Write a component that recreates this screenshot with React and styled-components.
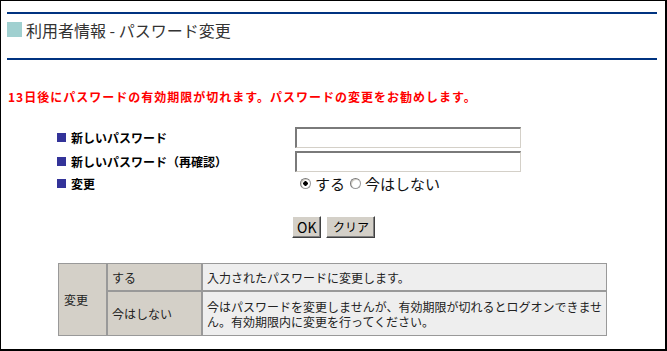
import React from "react";
import styled, { createGlobalStyle } from "styled-components";

const Global = createGlobalStyle`
  html, body { margin: 0; padding: 0; background: #fff; }
  body { font-family: "Noto Sans CJK JP", "Noto Sans", sans-serif; color: #000; }
  * { box-sizing: border-box; }
`;

const Frame = styled.div`
  width: 667px;
  height: 351px;
  border-top: 1px solid #000;
  border-left: 1px solid #000;
  border-right: 2px solid #000;
  border-bottom: 2px solid #000;
  padding: 11px 8px 0 6px;
  overflow: hidden;
`;

const Header = styled.div`
  border-top: 2px solid #003380;
  border-bottom: 2px solid #003380;
  height: 48px;
  padding-top: 8px;
  display: flex;
  align-items: flex-start;
  gap: 4px;
`;

const TitleMark = styled.span`
  width: 15px;
  height: 15px;
  background: #a0d0d0;
  flex: none;
`;

const Title = styled.h1`
  margin: 0;
  font-size: 16px;
  line-height: 16px;
  font-weight: normal;
  color: #333;
`;

const Notice = styled.p`
  margin: 29px 0 0 1px;
  font-size: 12px;
  line-height: 16px;
  font-weight: bold;
  letter-spacing: 1px;
  color: #ff0000;
  white-space: nowrap;
`;

const Form = styled.div`
  margin: 22px 0 0 50px;
  display: grid;
  grid-template-columns: 238px 226px;
  grid-auto-rows: auto;
  row-gap: 3px;
`;

const Label = styled.div`
  display: flex;
  align-items: center;
  gap: 5px;
  font-size: 12px;
  font-weight: bold;
  height: ${(p) => p.$h}px;
  white-space: nowrap;
`;

const LabelMark = styled.span`
  width: 9px;
  height: 9px;
  background: #333399;
  flex: none;
`;

const TextInput = styled.input`
  width: 226px;
  height: 21px;
  margin: 0;
  padding: 1px 3px;
  border-style: solid;
  border-width: 2px 1px 1px 2px;
  border-color: #7a7a7a #d4d0c8 #d4d0c8 #7a7a7a;
  background: #fff;
  font-size: 12px;
  outline: none;
`;

const RadioRow = styled.div`
  display: flex;
  align-items: center;
  height: 17px;
  padding-left: 5px;
  font-size: 15px;
  color: #111;
`;

const RadioLabel = styled.label`
  display: flex;
  align-items: center;
  gap: 4px;
  margin-right: 5px;
  line-height: 17px;
`;

const Radio = styled.input`
  appearance: none;
  -webkit-appearance: none;
  margin: 0;
  width: 11px;
  height: 11px;
  border-radius: 50%;
  border: 1px solid #9a9a9a;
  border-top-color: #7a7a7a;
  border-left-color: #7a7a7a;
  background: #fff;
  box-shadow: inset 1px 1px 0 #d4d0c8;
  &:checked {
    background: radial-gradient(circle, #000 0 2px, #fff 2.5px);
  }
`;

const ButtonRow = styled.div`
  margin: 24px 0 0 285px;
  display: flex;
  gap: 5px;
`;

const Button = styled.button`
  height: 22px;
  min-width: ${(p) => p.$w}px;
  margin: 0;
  padding: 0 4px;
  background: #d4d0c8;
  border-style: solid;
  border-width: 1px;
  border-color: #ffffff #404040 #404040 #ffffff;
  box-shadow: inset -1px -1px 0 #808080;
  font-family: "Noto Sans CJK JP", "Noto Sans", sans-serif;
  font-size: ${(p) => p.$fs}px;
  line-height: 18px;
  color: #000;
`;

const InfoTable = styled.table`
  margin: 25px 0 0 51px;
  width: 549px;
  border-collapse: separate;
  border-spacing: 0;
  font-size: 12px;
  color: #222;
`;

const Cell = styled.td`
  border: 1px solid #999;
  background: ${(p) => (p.$light ? "#eeeeee" : "#d4d0c8")};
  width: ${(p) => p.$w}px;
  height: ${(p) => p.$h || "auto"};
  padding: 1px ${(p) => (p.$light ? 1 : 4)}px 1px ${(p) => p.$pl || 4}px;
  line-height: 15px;
  vertical-align: middle;
`;

export default function App() {
  return (
    <>
      <Global />
      <Frame>
        <Header>
          <TitleMark />
          <Title>利用者情報 - パスワード変更</Title>
        </Header>
        <Notice>13日後にパスワードの有効期限が切れます。パスワードの変更をお勧めします。</Notice>
        <Form>
          <Label $h={21}><LabelMark />新しいパスワード</Label>
          <TextInput type="password" />
          <Label $h={21}><LabelMark />新しいパスワード（再確認）</Label>
          <TextInput type="password" />
          <Label $h={17}><LabelMark />変更</Label>
          <RadioRow>
            <RadioLabel><Radio type="radio" name="chg" defaultChecked />する</RadioLabel>
            <RadioLabel><Radio type="radio" name="chg" />今はしない</RadioLabel>
          </RadioRow>
        </Form>
        <ButtonRow>
          <Button $w={27} $fs={14}>OK</Button>
          <Button $w={49} $fs={12}>クリア</Button>
        </ButtonRow>
        <InfoTable>
          <tbody>
            <tr>
              <Cell rowSpan={2} $w={49} $pl={5}>変更</Cell>
              <Cell $w={95} $h="28px">する</Cell>
              <Cell $light>入力されたパスワードに変更します。</Cell>
            </tr>
            <tr>
              <Cell $w={95} $h="45px">今はしない</Cell>
              <Cell $light>今はパスワードを変更しませんが、有効期限が切れるとログオンできません。有効期限内に変更を行ってください。</Cell>
            </tr>
          </tbody>
        </InfoTable>
      </Frame>
    </>
  );
}
